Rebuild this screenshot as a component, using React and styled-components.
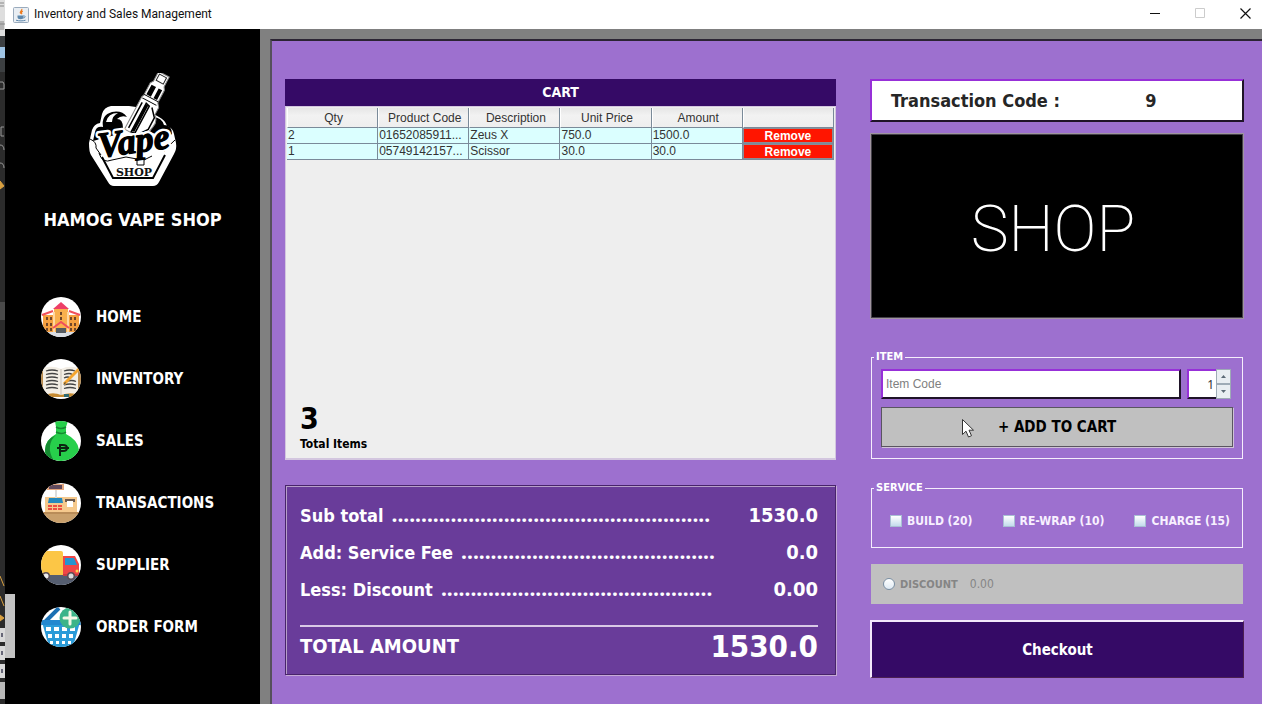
import React, { useState } from "react";
import styled, { createGlobalStyle } from "styled-components";

const ui = `"DejaVu Sans Condensed", "Noto Sans", sans-serif`;
const plain = `"Liberation Sans", Arial, sans-serif`;
const purple = "#9d70cf";
const deep = "#350a66";

const GlobalStyle = createGlobalStyle`
  * { box-sizing: border-box; }
  body { margin: 0; font-family: ${ui}; overflow: hidden; background: #2b2b2b; }
  button, input { font-family: inherit; margin: 0; }
`;

const Desktop = styled.div`
  display: grid;
  grid-template-columns: 5px 1fr;
  height: 100vh;
`;

const BehindWindow = styled.svg`
  display: block;
  width: 5px;
  height: 704px;
`;

const Window = styled.div`
  display: flex;
  flex-direction: column;
  min-width: 0;
  background: #808080;
`;

const TitleBar = styled.header`
  display: flex;
  align-items: center;
  flex: none;
  height: 29px;
  padding: 0 9px 0 8px;
  gap: 5px;
  background: #fff;
`;

const WindowTitle = styled.h1`
  flex: 1;
  margin: 0;
  padding-bottom: 1px;
  font: 400 12px/16px Roboto, "Noto Sans", sans-serif;
  color: #111;
`;

const WindowControls = styled.div`
  display: flex;
  gap: 29px;
  padding-bottom: 3px;
`;

const WindowButton = styled.button`
  display: flex;
  align-items: center;
  justify-content: center;
  width: 16px;
  height: 16px;
  padding: 0;
  border: 0;
  background: none;
  color: ${(p) => (p.disabled ? "#cccccc" : "#111")};
`;

const Body = styled.div`
  display: flex;
  flex: 1;
  min-height: 0;
`;

const Sidebar = styled.aside`
  position: relative;
  display: flex;
  flex-direction: column;
  align-items: center;
  flex: none;
  width: 255px;
  padding-top: 44px;
  background: #000;
  color: #fff;
`;

const ScrollThumb = styled.span`
  position: absolute;
  left: 0;
  bottom: 46px;
  width: 10px;
  height: 64px;
  background: #c3c3c3;
`;

const ShopName = styled.h2`
  margin: 21px 0 0;
  font-size: 18px;
  line-height: 24px;
  font-weight: 700;
`;

const Menu = styled.nav`
  display: flex;
  flex-direction: column;
  gap: 22px;
  align-self: stretch;
  margin-top: 65px;
  padding-left: 36px;
`;

const MenuLink = styled.a`
  display: flex;
  align-items: center;
  gap: 15px;
  height: 40px;
  color: #fff;
  font-size: 15px;
  line-height: 20px;
  font-weight: 700;
  text-decoration: none;
`;

const RoundIcon = styled.svg`
  width: 40px;
  height: 40px;
  border-radius: 50%;
  background: #fff;
`;

const Content = styled.main`
  display: grid;
  grid-template-columns: 551fr 374fr;
  column-gap: 34px;
  align-items: start;
  flex: 1;
  min-width: 0;
  margin: 10px 0 0 10px;
  padding: 38px 18px 0 13px;
  border-top: 2px solid #2b2433;
  border-left: 2px solid #55505c;
  background: ${purple};
`;

const Column = styled.section`
  display: flex;
  flex-direction: column;
  min-width: 0;
`;

const Cart = styled.div`
  display: flex;
  flex-direction: column;
`;

const CartTitle = styled.h2`
  margin: 0;
  background: ${deep};
  color: #fff;
  text-align: center;
  font-size: 14px;
  line-height: 27px;
`;

const CartBody = styled.div`
  display: flex;
  flex-direction: column;
  justify-content: space-between;
  min-height: 354px;
  padding: 1px 1px 6px 1px;
  border: solid #d3c6df;
  border-width: 1px 1px 2px 1px;
  background: #eeeeee;
`;

const CartTable = styled.table`
  width: 100%;
  table-layout: fixed;
  border-collapse: separate;
  border-spacing: 0;
  font: 12px/15px ${plain};
  color: #333;
`;

const HeadCell = styled.th`
  height: 20px;
  padding: 2px 0 0 2px;
  border-right: 1px solid #7a8a99;
  border-bottom: 1px solid #7a8a99;
  border-left: 1px solid #fff;
  font-weight: 400;
  line-height: 15px;
  background: linear-gradient(#e6e6e6, #f2f2f2 40%, #eeeeee);
`;

const Cell = styled.td`
  height: 16px;
  padding: ${(p) => (p.$action ? "0" : "0 2px 0 1px")};
  border-right: 1px solid #7a8a99;
  border-bottom: 1px solid #7a8a99;
  background: #dbffff;
  overflow: hidden;
  text-overflow: ellipsis;
  white-space: nowrap;
`;

const RemoveButton = styled.button`
  display: block;
  width: 100%;
  height: 15px;
  padding: 0;
  border: 1px solid #8c8c96;
  background: #ff1500;
  color: #fff;
  font: 700 12px/12px ${plain};
`;

const ItemCount = styled.div`
  padding-left: 13px;
  color: #000;
  font-weight: 700;
`;

const CountNumber = styled.div`
  font-size: 30px;
  line-height: 34px;
`;

const CountLabel = styled.div`
  font-size: 12px;
  line-height: 16px;
`;

const Summary = styled.div`
  display: flex;
  flex-direction: column;
  margin-top: 25px;
  padding: 10px 17px 8px 14px;
  border: 1px solid #48246b;
  box-shadow: inset 1px 1px 0 #b79fc9, 1px 1px 0 #c5a9d6;
  background: #693c9a;
  color: #fff;
  font-weight: 700;
`;

const SummaryRow = styled.div`
  display: flex;
  align-items: ${(p) => (p.$total ? "center" : "baseline")};
  height: ${(p) => (p.$total ? "39px" : "37px")};
  line-height: 37px;
  white-space: nowrap;
`;

const SummaryLabel = styled.span`
  font-size: ${(p) => (p.$total ? "20px" : "18px")};
`;

const Dots = styled.span`
  flex: 1 1 0;
  min-width: 0;
  margin-left: 8px;
  font-family: "Noto Sans", sans-serif;
  font-size: 21px;
`;

const SummaryValue = styled.span`
  margin-left: auto;
  font-size: ${(p) => (p.$total ? "31px" : "20px")};
`;

const Rule = styled.hr`
  width: 100%;
  margin: 18px 0 0;
  border: 0;
  border-top: 2px solid #d9c9e6;
`;

const TransactionBox = styled.div`
  display: grid;
  grid-template-columns: 1fr 1fr;
  align-items: center;
  height: 43px;
  border: 2px solid;
  border-color: #9730d8 #1f1428 #1f1428 #9730d8;
  background: #fff;
  color: #262626;
  font-size: 18px;
  font-weight: 700;
  white-space: nowrap;
`;

const TransactionLabel = styled.span`
  padding-left: 19px;
`;

const TransactionValue = styled.output`
  text-align: center;
`;

const ShopSign = styled.div`
  display: flex;
  align-items: center;
  justify-content: center;
  height: 186px;
  margin-top: 11px;
  padding: 8px 8px 0 0;
  border: 1px solid #a0959f;
  box-shadow: inset 0 0 0 1px #45404a;
  background: #000;
  color: #fff;
  font: 200 64px/80px Roboto, Lato, sans-serif;
`;

const Group = styled.fieldset`
  min-width: 0;
  margin: ${(p) => p.$top} 1px 0;
  padding: 0 2px;
  border: 1px solid #f6eefc;
`;

const GroupTitle = styled.legend`
  padding: 0 2px;
  color: #fff;
  font-size: 11px;
  line-height: 14px;
  font-weight: 700;
`;

const ItemFields = styled.div`
  padding: 5px 7px 11px;
`;

const EntryRow = styled.div`
  display: flex;
  gap: 6px;
  height: 30px;
  padding-right: 2px;
`;

const CodeInput = styled.input`
  flex: 1;
  min-width: 0;
  padding: 0 3px;
  border: 2px solid;
  border-color: #9730d8 #1f1428 #1f1428 #9730d8;
  background: #fff;
  font: 12px ${plain};
  &::placeholder { color: #808080; opacity: 1; }
`;

const Spinner = styled.div`
  display: grid;
  grid-template-columns: 29px 15px;
`;

const SpinnerInput = styled.input`
  width: 100%;
  min-width: 0;
  padding: 0 2px;
  border: solid;
  border-width: 2px 0 2px 2px;
  border-color: #9730d8 #1f1428 #1f1428 #9730d8;
  background: #fff;
  color: #333;
  text-align: right;
  font: 12px "Noto Sans", sans-serif;
`;

const SpinnerButtons = styled.div`
  display: grid;
  grid-template-rows: 1fr 1fr;
`;

const SpinnerButton = styled.button`
  display: flex;
  align-items: center;
  justify-content: center;
  padding: 0;
  border: 1px solid #9eabb6;
  background: #e9eef2;
`;

const AddButton = styled.button`
  position: relative;
  width: 100%;
  height: 40px;
  margin-top: 8px;
  border: 1px solid #5a5560;
  box-shadow: 1px 1px 0 #cfc3d6;
  background: #c0c0c0;
  color: #000;
  font-size: 15px;
  font-weight: 700;
`;

const Pointer = styled.svg`
  position: absolute;
  left: 79px;
  top: 10px;
  width: 14px;
  height: 21px;
`;

const Options = styled.div`
  display: flex;
  justify-content: space-between;
  padding: 18px 10px 18px 16px;
`;

const Option = styled.label`
  display: flex;
  align-items: center;
  gap: 5px;
  color: #f8f0ff;
  font-size: 12px;
  line-height: 16px;
  font-weight: 700;
  white-space: nowrap;
`;

const TickBox = styled.input.attrs({ type: "checkbox" })`
  appearance: none;
  width: 12px;
  height: 12px;
  border: 1px solid #a9c0d4;
  background: linear-gradient(#ffffff, #c3dcec);
`;

const DiscountBar = styled.div`
  display: flex;
  align-items: center;
  gap: 12px;
  height: 40px;
  margin: 16px 1px 0;
  padding-left: 12px;
  background: #c0c0c0;
`;

const DiscountLabel = styled.label`
  display: flex;
  align-items: center;
  gap: 5px;
  color: #858585;
  font-size: 11px;
  font-weight: 700;
`;

const RadioDot = styled.input.attrs({ type: "radio" })`
  appearance: none;
  width: 12px;
  height: 12px;
  border: 1px solid #7a8fa3;
  border-radius: 50%;
  background: linear-gradient(#ffffff, #dfeaf4);
`;

const DiscountInput = styled.input`
  flex: 1;
  min-width: 0;
  padding: 0;
  border: 0;
  background: none;
  color: #858585;
  font-size: 12px;
`;

const CheckoutButton = styled.button`
  height: 58px;
  margin-top: 16px;
  border: solid;
  border-width: 2px 1px 1px 2px;
  border-color: #f3e8fb #4c2052 #4c2052 #f3e8fb;
  background: ${deep};
  color: #fff;
  font-size: 15px;
  font-weight: 700;
`;

function Backdrop() {
  return (
    <BehindWindow viewBox="0 0 5 704" aria-hidden="true">
      <rect width="5" height="704" fill="#2b2b2b" />
      <rect width="5" height="36" fill="#dedede" />
      <rect y="36" width="5" height="36" fill="#3c3f41" />
      <path d="M0 3h4M0 6h4M1 21v9M3 21v9M0 24h5" stroke="#888" />
      <rect y="47" width="5" height="11" fill="#9fc4e4" />
      <path d="M0 82q4-1 4 2v5H0M4 127H1v9h3M0 145q4 0 4 5M0 163q4 0 4 5" stroke="#999" fill="none" />
      <path d="M0 181l4 5-4 3zM0 576l4 10M0 596l4 10M0 615l4 3-4 3" stroke="#d9a040" fill="#d9a040" />
      <rect y="302" width="5" height="18" fill="#4a4a4a" />
      <path d="M0 628h5v14H0zM0 646h5v14H0zM0 664h5v14H0z" fill="#d9d9d9" />
      <path d="M1 633h2v4H1zM1 651h2v4H1zM1 669h2v4H1z" fill="#667" />
      <rect y="682" width="5" height="17" fill="#b9b9b9" />
    </BehindWindow>
  );
}

function JavaIcon() {
  return (
    <svg width="16" height="16" viewBox="0 0 16 16" aria-hidden="true">
      <rect x=".5" y=".5" width="15" height="15" rx="1" fill="#e9eef3" stroke="#9aabbd" />
      <path d="M8.6 2c1.4 1.6-2.6 2.6-1 4.600M9.800 4.200c-2 1-1.600 1.800-.8 3" fill="none" stroke="#ee7a1e" strokeWidth="1.300" />
      <path d="M4.500 8.500h6v1.500c0 1.800-1 2.200-3 2.200s-3-.6-3-2.200z" fill="#5d87ac" />
      <path d="M10.500 8.800c2.300-.3 2 2.200-.3 2.200M3 13.200c3 .9 7 .9 9.500 0" fill="none" stroke="#5d87ac" />
    </svg>
  );
}

function VapeLogo() {
  return (
    <svg width="90" height="114" viewBox="0 0 90 114" role="img" aria-label="Vape Shop">
      <path d="M1 70 4 57q2-6 8-7l2-9q2-7 9-8h18l14 2 16 9q6 3 8 9 6 2 7 8l2 9q1 6-2 11L71 109q-2 4-6 4H26q-4 0-6-4L3 82Q1 79 1 70z" fill="#fff" />
      <path d="M7 59q1-6 8-5-2-12 9-15 10-2 15 5-6-2-10 2 6 0 6 9l-8 7-22 6z" fill="#000" />
      <path d="M18 49q2-9 12-9-6 3-6 9z" fill="#fff" />
      <path d="M66 44q8 1 10 8 8 0 8 9l-5 4-17-6z" fill="#000" />
      <path d="M73 61q1-5 6-4" fill="none" stroke="#fff" />
      <g transform="translate(75 3) rotate(28)">
        <path d="M-6-2H6V9l2 3v14l3 4v8q6 5 4 12l-3 15H-9V28l1-2V12l2-3z" fill="#fff" stroke="#888" />
        <path d="M-4 0H4V7H-4z" fill="#fff" stroke="#222" />
        <path d="M-6 13h5v11h-5zM2 13h4v11H2z" fill="#000" />
        <path d="M-8 25H8M-8 29H8" stroke="#000" />
        <path d="M-6 33v29M-2 32v32h4V33zM5 33l7 8v13l-5 7" fill="none" stroke="#000" strokeWidth="1.500" />
        <path d="M-2 33h3v30h-3z" fill="#000" />
      </g>
      <path d="M2 66q7 3 6 9l5 7M87 67q-6 5-11 12" fill="none" stroke="#000" />
      <path d="M14 84 25 105H65L77 82" fill="none" stroke="#000" strokeWidth="2" />
      <g transform="rotate(-8 45 72)" fontFamily="Liberation Serif, serif" fontStyle="italic" fontWeight="700" fontSize="36" textAnchor="middle" strokeLinejoin="round">
        <text x="46" y="80" fill="#000" stroke="#fff" strokeWidth="6" paintOrder="stroke">Vape</text>
        <text x="46" y="80" fill="#000" stroke="#000" strokeWidth="1.200" aria-hidden="true">Vape</text>
      </g>
      <path d="M11 80q3 11 13 7l14-3 11 2v6h7v-5l8-4" fill="none" stroke="#000" />
      <text x="46" y="103" textAnchor="middle" fontFamily="DejaVu Serif, serif" fontWeight="700" fontSize="11" fill="#111">SHOP</text>
    </svg>
  );
}

const icons = {
  home: (
    <>
      <path d="M0 34h40v6H0z" fill="#d9dde3" />
      <path d="M2 18h36v17H2z" fill="#f5a040" />
      <path d="M13 12h14v23H13z" fill="#f9b04d" />
      <path d="M13 15v20M27 15v20" stroke="#ffd7a0" strokeWidth="2" />
      <path d="M12 12 20 5l8 7z" fill="#ed3f67" />
      <path d="M1 18l11-4M39 18l-11-4M12 31l8-6 8 6" fill="none" stroke="#f04f5c" strokeWidth="2" />
      <path d="M5 20h2v3H5zm4 0h2v3H9zM5 26h2v3H5zm4 0h2v3H9zM5 31h2v3H5zm4 0h2v3H9zM29 20h2v3h-2zm4 0h2v3h-2zM29 26h2v3h-2zm4 0h2v3h-2zM29 31h2v3h-2zm4 0h2v3h-2zM19 15h2v3h-2zM19 20h2v3h-2z" fill="#704629" />
      <path d="M15 31h10v5H15z" fill="#555b60" />
    </>
  ),
  book: (
    <>
      <path d="M0 12h40v18H0z" fill="#b98b4d" />
      <path d="M2 9q10-3 18 1 8-4 17-1v26q-9-3-17 1-9-4-18-1z" fill="#f3eee5" />
      <path d="M20 10v26" stroke="#c9c1b5" />
      <path d="M5 12q6-2 12 0M5 15.500q6-2 12 0M5 19q6-2 12 0M5 22.500q6-2 12 0M5 26q6-2 12 0M5 29.500q6-2 12 0M23 12q6-2 11 0M23 15.500q6-2 8 0M23 19q4-2 6 0M25 22.500q6-2 10 0M23 26q6-2 12 0M23 29.500q6-2 12 0" fill="none" stroke="#444" strokeWidth="1.300" />
      <path d="M6 35q8-2 14 1 8-3 15-1l-4 3H9z" fill="#c58a31" />
      <path d="M23 35h5v3h-5z" fill="#2e6a70" />
      <path d="M23 25 39 9" stroke="#f5a52e" strokeWidth="3" />
      <path d="M22 26l2-3 1 1z" fill="#444" />
    </>
  ),
  bag: (
    <>
      <path d="M14 0h13l-2 6v7q12 6 13 16 0 11-18 11T4 29q0-10 11-16V6z" fill="#27cf4b" />
      <path d="M15 14Q4 19 4 29q0 8 9 11-5-8-4-15 1-7 6-11z" fill="#158a31" />
      <path d="M15 6q5 3 10 0M15 11q6 3 10 0" fill="none" stroke="#158a31" strokeWidth="1.500" />
      <path d="M19 35V24h3q4 0 4 3t-4 3h-3M16 27h12" fill="none" stroke="#0c2512" strokeWidth="2" />
    </>
  ),
  register: (
    <>
      <path d="M4 14h32v17H4z" fill="#f5c98d" />
      <path d="M0 29h40v11H0z" fill="#c9a06c" />
      <path d="M0 29h40v2H0z" fill="#b98c58" />
      <path d="M14 7h2v8h-2z" fill="#ddd" />
      <path d="M6 1h17v6H6z" fill="#e3a57c" />
      <path d="M8 2h13v4H8z" fill="#60495c" />
      <path d="M8 15h13l1 5H7z" fill="#2488bd" />
      <path d="M7 22h4v2H7zm5 0h4v2h-4zm5 0h4v2h-4zM7 25h4v2H7zm5 0h4v2h-4zm5 0h4v2h-4z" fill="#ee4e43" />
      <path d="M24 16h10v3H24z" fill="#6b5a50" />
      <path d="M26 18h6v6h-6z" fill="#fff" />
    </>
  ),
  truck: (
    <>
      <path d="M0 29h40v11H0z" fill="#555e70" />
      <path d="M0 6h20q2 0 2 2v22H0z" fill="#fcc646" />
      <path d="M22 11h12l4 8v12H22z" fill="#f04646" />
      <path d="M24 13h9l3 7H24z" fill="#2494cf" />
      <path d="M22 29h18v2H22z" fill="#c93b42" />
      <circle cx="36" cy="26" r="1.500" fill="#ffd34c" />
      <circle cx="5" cy="31" r="4" fill="#5b4d55" />
      <circle cx="5" cy="31" r="2.500" fill="#eee" />
      <circle cx="30" cy="31" r="4" fill="#5b4d55" />
      <circle cx="30" cy="31" r="2.500" fill="#ddd" />
    </>
  ),
  basket: (
    <>
      <path d="M1 15h38l-7 25H8z" fill="#2b9bd8" />
      <path d="M4 15 18 1" stroke="#1b6fb3" strokeWidth="4" />
      <path d="M0 13h40v5H0z" fill="#2388cf" />
      <path d="M5 20h5v4H5zm8 0h5v4h-5zm8 0h5v4h-5zm8 0h5v4h-5zM7 27h4v4H7zm7 0h4v4h-4zm7 0h4v4h-4zm7 0h4v4h-4zM9 34h3v3H9zm6 0h3v3h-3zm6 0h3v3h-3zm6 0h3v3h-3z" fill="#fff" />
      <circle cx="29" cy="11" r="10.500" fill="#3cb489" />
      <path d="M29 5v12M23 11h12" stroke="#f3f7e6" strokeWidth="3" strokeLinecap="round" />
    </>
  ),
};

const menu = [
  ["home", "HOME"],
  ["book", "INVENTORY"],
  ["bag", "SALES"],
  ["register", "TRANSACTIONS"],
  ["truck", "SUPPLIER"],
  ["basket", "ORDER FORM"],
];

const items = [
  ["2", "01652085911...", "Zeus X", "750.0", "1500.0"],
  ["1", "05749142157...", "Scissor", "30.0", "30.0"],
];

const totals = [
  { label: "Sub total", dots: 54, value: "1530.0" },
  { label: "Add: Service Fee", dots: 43, value: "0.0" },
  { label: "Less: Discount", dots: 46, value: "0.00" },
];

export default function App() {
  const [code, setCode] = useState("");
  const [qty, setQty] = useState(1);
  const [discount, setDiscount] = useState("0.00");

  return (
    <Desktop>
      <GlobalStyle />
      <Backdrop />
      <Window>
        <TitleBar>
          <JavaIcon />
          <WindowTitle>Inventory and Sales Management</WindowTitle>
          <WindowControls>
            <WindowButton aria-label="Minimize">
              <svg width="10" height="10"><path d="M0 5.500h10" stroke="currentColor" /></svg>
            </WindowButton>
            <WindowButton aria-label="Maximize" disabled>
              <svg width="10" height="10"><path d="M.5.500h9v9h-9z" fill="none" stroke="currentColor" /></svg>
            </WindowButton>
            <WindowButton aria-label="Close">
              <svg width="11" height="11"><path d="M.5.500l10 10M10.500.500l-10 10" stroke="currentColor" strokeWidth="1.200" /></svg>
            </WindowButton>
          </WindowControls>
        </TitleBar>
        <Body>
          <Sidebar>
            <VapeLogo />
            <ShopName>HAMOG VAPE SHOP</ShopName>
            <Menu>
              {menu.map(([icon, label]) => (
                <MenuLink key={label} href={`#${icon}`}>
                  <RoundIcon viewBox="0 0 40 40" aria-hidden="true">{icons[icon]}</RoundIcon>
                  {label}
                </MenuLink>
              ))}
            </Menu>
            <ScrollThumb />
          </Sidebar>
          <Content>
            <Column>
              <Cart>
                <CartTitle>CART</CartTitle>
                <CartBody>
                  <CartTable>
                    <thead>
                      <tr>
                        {["Qty", "Product Code", "Description", "Unit Price", "Amount", ""].map((h) => (
                          <HeadCell key={h} scope="col">{h}</HeadCell>
                        ))}
                      </tr>
                    </thead>
                    <tbody>
                      {items.map((row) => (
                        <tr key={row[1]}>
                          {row.map((value, i) => <Cell key={i}>{value}</Cell>)}
                          <Cell $action><RemoveButton>Remove</RemoveButton></Cell>
                        </tr>
                      ))}
                    </tbody>
                  </CartTable>
                  <ItemCount>
                    <CountNumber>3</CountNumber>
                    <CountLabel>Total Items</CountLabel>
                  </ItemCount>
                </CartBody>
              </Cart>
              <Summary>
                {totals.map((t) => (
                  <SummaryRow key={t.label}>
                    <SummaryLabel>{t.label}</SummaryLabel>
                    <Dots aria-hidden="true">{".".repeat(t.dots)}</Dots>
                    <SummaryValue>{t.value}</SummaryValue>
                  </SummaryRow>
                ))}
                <Rule />
                <SummaryRow $total>
                  <SummaryLabel $total>TOTAL AMOUNT</SummaryLabel>
                  <SummaryValue $total>1530.0</SummaryValue>
                </SummaryRow>
              </Summary>
            </Column>
            <Column>
              <TransactionBox>
                <TransactionLabel>Transaction Code :</TransactionLabel>
                <TransactionValue>9</TransactionValue>
              </TransactionBox>
              <ShopSign>SHOP</ShopSign>
              <Group $top="31px">
                <GroupTitle>ITEM</GroupTitle>
                <ItemFields>
                  <EntryRow>
                    <CodeInput
                      aria-label="Item Code"
                      placeholder="Item Code"
                      value={code}
                      onChange={(e) => setCode(e.target.value)}
                    />
                    <Spinner>
                      <SpinnerInput
                        aria-label="Quantity"
                        value={qty}
                        onChange={(e) => setQty(Number(e.target.value) || 1)}
                      />
                      <SpinnerButtons>
                        <SpinnerButton aria-label="Increase" onClick={() => setQty(qty + 1)}>
                          <svg width="5" height="3"><path d="M0 3h5L2.500 0z" fill="#5c6a76" /></svg>
                        </SpinnerButton>
                        <SpinnerButton aria-label="Decrease" onClick={() => setQty(Math.max(1, qty - 1))}>
                          <svg width="5" height="3"><path d="M0 0h5L2.500 3z" fill="#5c6a76" /></svg>
                        </SpinnerButton>
                      </SpinnerButtons>
                    </Spinner>
                  </EntryRow>
                  <AddButton>
                    + ADD TO CART
                    <Pointer viewBox="0 0 14 21" aria-hidden="true">
                      <path d="M1.500 1.500v15l3.500-3.300 2.500 5.800 3-1.300-2.500-5.500h4.500z" fill="#fff" stroke="#333" />
                    </Pointer>
                  </AddButton>
                </ItemFields>
              </Group>
              <Group $top="22px">
                <GroupTitle>SERVICE</GroupTitle>
                <Options>
                  <Option><TickBox />BUILD (20)</Option>
                  <Option><TickBox />RE-WRAP (10)</Option>
                  <Option><TickBox />CHARGE (15)</Option>
                </Options>
              </Group>
              <DiscountBar>
                <DiscountLabel><RadioDot name="discount" />DISCOUNT</DiscountLabel>
                <DiscountInput
                  aria-label="Discount amount"
                  value={discount}
                  onChange={(e) => setDiscount(e.target.value)}
                />
              </DiscountBar>
              <CheckoutButton>Checkout</CheckoutButton>
            </Column>
          </Content>
        </Body>
      </Window>
    </Desktop>
  );
}
